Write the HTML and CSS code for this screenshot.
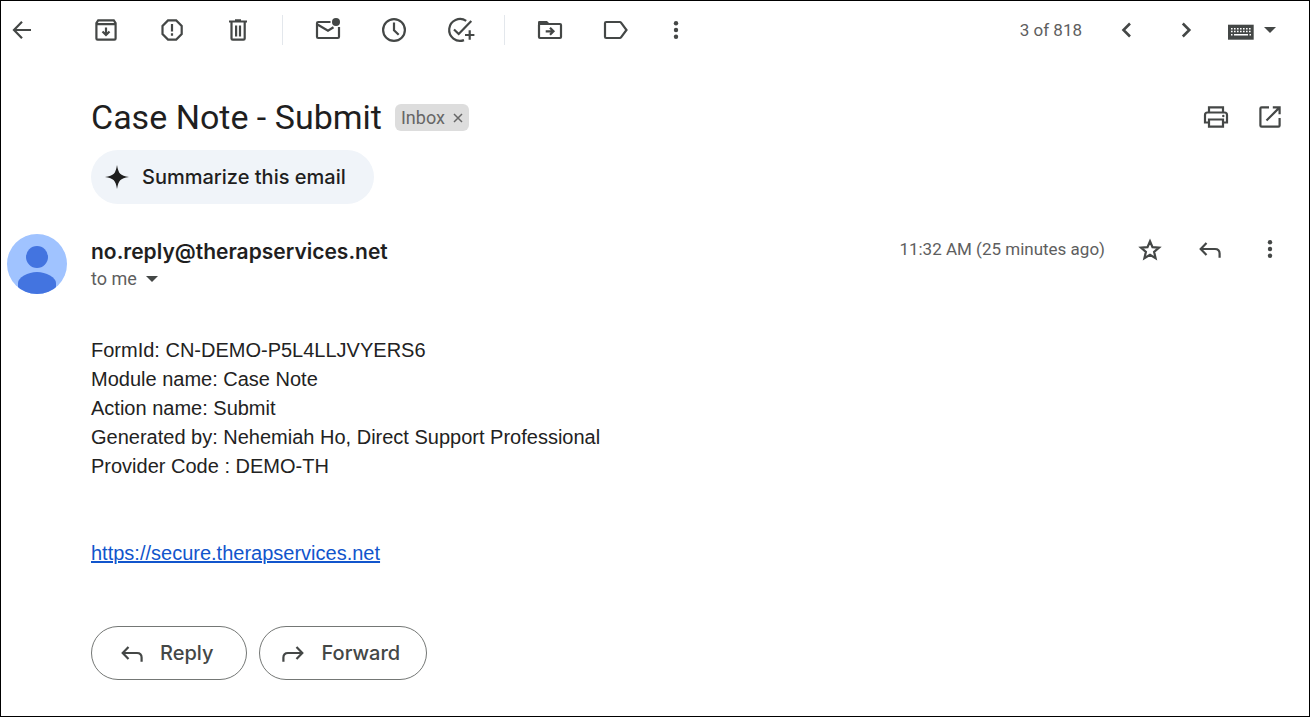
FILE: index.html
```html
<!DOCTYPE html>
<html lang="en">

<head>
    <meta charset="UTF-8">
    <meta name="viewport" content="width=device-width, initial-scale=1.0">
    <title>Case Note - Submit</title>
    <link rel="stylesheet" href="styles.css">
</head>

<body>

    <div class="mail">
        <header class="toolbar">
            <button class="icon-btn back" aria-label="Back to inbox">
                <svg viewBox="0 0 30 30"><path d="M24 15H7.5M15 6.7L7 15l8 8.3"/></svg>
            </button>
            <div class="group">
                <button class="icon-btn" aria-label="Archive">
                    <svg viewBox="0 0 30 30"><path d="M5.4 9.2V23.4q0 1.2 1.2 1.2h16.8q1.2 0 1.2-1.2V9.2M5.4 9.2V8l1.8-2.6h15.6L24.6 8v1.2zM15 12.5v7M11.5 16.5l3.5 3.5 3.5-3.5"/></svg>
                </button>
                <button class="icon-btn" aria-label="Report spam">
                    <svg viewBox="0 0 30 30"><path d="M11 5.4h8.2l5.5 5.5v8.2l-5.5 5.5H11l-5.5-5.5v-8.2z"/><path d="M15 9v7.5M15 18.3v2.4"/></svg>
                </button>
                <button class="icon-btn" aria-label="Delete">
                    <svg viewBox="0 0 30 30"><path d="M6 6.5h18M12 5.3h6M8.5 7v16.5q0 1.2 1.2 1.2h10.800q1.200 0 1.200-1.200V7M13.100 10.500v11M17 10.500v11"/></svg>
                </button>
            </div>
            <div class="group">
                <button class="icon-btn" aria-label="Mark as unread">
                    <svg viewBox="0 0 30 30"><path d="M17.5 7H5.2q-1.2 0-1.2 1.2v13.6q0 1.2 1.2 1.2h19.6q1.200 0 1.200-1.200V12M4.500 9.500l10.500 6.200 5.500-3.400"/><circle class="solid" cx="23" cy="7" r="4"/></svg>
                </button>
                <button class="icon-btn" aria-label="Snooze">
                    <svg viewBox="0 0 30 30"><circle cx="15" cy="15" r="10.9"/><path d="M15 7.5v7.8l4.7 4.5"/></svg>
                </button>
                <button class="icon-btn" aria-label="Add to tasks">
                    <svg viewBox="0 0 30 30"><path d="M21.2 5.9A10.9 10.9 0 1 0 19 25.1M9 14.5l4.7 4.5L26.3 6M24.7 15.3v9.4M20 20h9.4"/></svg>
                </button>
            </div>
            <div class="group last">
                <button class="icon-btn" aria-label="Move to">
                    <svg viewBox="0 0 30 30"><rect x="4" y="9" width="22" height="14" rx="1"/><path class="solid" d="M3 10V7.2Q3 6 4.2 6H12l3 3v1z"/><path d="M10.7 16.3h7M15 12.8l3.5 3.5-3.5 3.5"/></svg>
                </button>
                <button class="icon-btn" aria-label="Labels">
                    <svg viewBox="0 0 30 30"><path d="M5.2 7h13.6q.8 0 1.4.8l5.3 7.2-5.3 7.2q-.6.8-1.4.8H5.2Q4 23 4 21.800V8.200Q4 7 5.200 7z"/></svg>
                </button>
            </div>
            <button class="icon-btn more" aria-label="More">
                <svg class="solid" viewBox="0 0 30 30"><circle cx="15" cy="8.2" r="2.2"/><circle cx="15" cy="15" r="2.2"/><circle cx="15" cy="21.8" r="2.2"/></svg>
            </button>
            <div class="pager">
                <span class="muted">3 of 818</span>
                <button class="icon-btn" aria-label="Newer">
                    <svg class="bold" viewBox="0 0 30 30"><path d="M18 8.5L11.5 15l6.5 6.5"/></svg>
                </button>
                <button class="icon-btn" aria-label="Older">
                    <svg class="bold" viewBox="0 0 30 30"><path d="M10.8 8.5l6.5 6.5-6.5 6.5"/></svg>
                </button>
                <button class="keyboard" aria-label="Input tools">
                    <svg viewBox="0 0 30 30"><path class="solid" d="M2 9.7h25.7v15H2z"/><path class="keys" d="M5 13.7h20M5 16.5h20"/><path class="space" d="M5 19.7h1.500M8 19.700h14M23.500 19.700h1.500"/></svg>
                    <span class="caret"></span>
                </button>
            </div>
        </header>

        <main class="message">
            <div class="subject-row">
                <h1 class="subject">Case Note - Submit</h1>
                <span class="label">Inbox
                    <button class="label-close" aria-label="Remove label">
                        <svg viewBox="0 0 10 10"><path d="M1 1l8 8M9 1L1 9"/></svg>
                    </button>
                </span>
                <div class="subject-actions">
                    <button class="icon-btn" aria-label="Print">
                        <svg viewBox="0 0 30 30"><path d="M8 10V5.3h14V10M8 20.5H4V13q0-2.5 2.5-2.5h17Q26 10.500 26 13v7.500h-4M8 17.500h14v7.200H8z"/><circle class="solid" cx="22.300" cy="14" r="1.200"/></svg>
                    </button>
                    <button class="icon-btn" aria-label="Open in new window">
                        <svg viewBox="0 0 30 30"><path d="M14 5.4H6.6q-1.2 0-1.2 1.2v16.8q0 1.2 1.2 1.2h16.8q1.2 0 1.2-1.2V16M17.8 5.4h6.8v6.8M24.6 5.4L11.5 18.5"/></svg>
                    </button>
                </div>
            </div>

            <button class="summarize">
                <svg viewBox="0 0 24 24"><path d="M12 0Q13 6.5 15.2 8.8 17.5 11 24 12q-6.5 1-8.8 3.2Q13 17.5 12 24q-1-6.5-3.2-8.8Q6.5 13 0 12q6.5-1 8.8-3.2Q11 6.5 12 0z"/></svg>
                Summarize this email
            </button>

            <div class="sender-row">
                <svg class="avatar" viewBox="0 0 60 60">
                    <clipPath id="round"><circle cx="30" cy="30" r="30"/></clipPath>
                    <g clip-path="url(#round)">
                        <path fill="#a0c3ff" d="M0 0h60v60H0z"/>
                        <circle fill="#4374e0" cx="30" cy="23" r="11"/>
                        <path fill="#4374e0" d="M11 60V49q0-4 6-7.500Q23 38 30 38t13 3.500q6 3.500 6 7.500v11z"/>
                    </g>
                </svg>
                <div class="sender">
                    <span class="address">no.reply@therapservices.net</span>
                    <button class="recipient">to me <span class="caret"></span></button>
                </div>
                <div class="sender-actions">
                    <span class="muted">11:32 AM (25 minutes ago)</span>
                    <button class="icon-btn" aria-label="Star">
                        <svg viewBox="0 0 30 30"><path d="M15 7.200l2.500 5.900 6.500.5-4.900 4.200 1.500 6.400-5.600-3.400-5.600 3.400 1.500-6.400L6 13.600l6.500-.5z"/></svg>
                    </button>
                    <button class="icon-btn" aria-label="Reply">
                        <svg viewBox="0 0 30 30"><path d="M11.5 9L5.700 15l5.800 6M6.500 15H20q4.600 0 4.600 4.600v4.200"/></svg>
                    </button>
                    <button class="icon-btn" aria-label="More">
                        <svg class="solid" viewBox="0 0 30 30"><circle cx="15" cy="8.2" r="2.2"/><circle cx="15" cy="15" r="2.2"/><circle cx="15" cy="21.8" r="2.2"/></svg>
                    </button>
                </div>
            </div>

            <div class="body">
                <p>
                    FormId: CN-DEMO-P5L4LLJVYERS6<br>
                    Module name: Case Note<br>
                    Action name: Submit<br>
                    Generated by: Nehemiah Ho, Direct Support Professional<br>
                    Provider Code : DEMO-TH
                </p>
                <p><a href="https://secure.therapservices.net">https://secure.therapservices.net</a></p>
            </div>

            <div class="replies">
                <button class="pill reply">
                    <svg viewBox="0 0 30 30"><path d="M11.5 9L5.700 15l5.800 6M6.500 15H20q4.600 0 4.600 4.600v4.200"/></svg>
                    Reply
                </button>
                <button class="pill">
                    <svg viewBox="0 0 30 30"><path d="M18.500 9l5.800 6-5.800 6M23.500 15H10q-4.600 0-4.600 4.600v4.200"/></svg>
                    Forward
                </button>
            </div>
        </main>
    </div>

</body>

</html>
```

FILE: styles.css
```css
* {
    box-sizing: border-box;
}

body {
    margin: 0;
    background-color: #fff;
    color: #1f1f1f;
    font-family: Roboto, sans-serif;
}

button {
    display: flex;
    align-items: center;
    margin: 0;
    padding: 0;
    border: none;
    background: none;
    color: #444746;
    font-family: inherit;
    cursor: pointer;
}

svg {
    display: block;
    flex: none;
    width: 30px;
    height: 30px;
    fill: none;
    stroke: #444746;
    stroke-width: 2.2;
}

.solid {
    fill: #444746;
    stroke: none;
}

.bold {
    stroke-width: 2.6;
}

.muted {
    color: #5e5e5e;
    font-size: 17px;
    line-height: 24px;
    white-space: nowrap;
}

.caret {
    border: 6px solid transparent;
    border-top-color: #444746;
    border-bottom: none;
}

.mail {
    min-height: 100vh;
    padding: 0 24px 36px 6px;
    border: 1px solid #000;
}

/* toolbar */
.toolbar {
    display: flex;
    align-items: center;
    height: 58px;
}

.back {
    margin-right: 54px;
}

.group {
    display: flex;
    gap: 36px;
    margin-right: 30px;
    padding-right: 29px;
    border-right: 1px solid #e3e7ec;
}

.group.last {
    padding-right: 0;
    border-right: none;
}

.pager {
    display: flex;
    align-items: center;
    gap: 30px;
    margin-left: auto;
}

.keyboard {
    gap: 8px;
    padding-right: 9px;
    margin-left: -6px;
}

.keys {
    stroke: #fff;
    stroke-width: 1.6;
    stroke-dasharray: 1.6 1.4;
}

.space {
    stroke: #fff;
    stroke-width: 1.4;
}

/* message */
.subject-row {
    display: flex;
    align-items: center;
    height: 54px;
    margin: 31px 0 6px;
    padding-left: 84px;
}

.subject {
    margin: 0;
    font-size: 34px;
    font-weight: 400;
    line-height: 40px;
}

.label {
    display: flex;
    align-items: center;
    gap: 8px;
    height: 27px;
    margin-left: 13px;
    padding: 0 6px;
    border-radius: 6px;
    background-color: #ddd;
    color: #666;
    font-size: 18px;
}

.label-close {
    padding-top: 2px;
}

.label-close svg {
    width: 10px;
    height: 10px;
    stroke: #666;
    stroke-width: 1.5;
}

.subject-actions {
    display: flex;
    gap: 24px;
    margin-left: auto;
}

.summarize {
    gap: 13px;
    height: 54px;
    margin-left: 84px;
    padding: 0 28px 0 14px;
    border-radius: 27px;
    background-color: #f0f4f9;
    color: #1f1f1f;
    font-family: Inter, sans-serif;
    font-size: 20px;
    font-weight: 500;
}

.summarize svg {
    width: 24px;
    height: 24px;
    fill: #1f1f1f;
    stroke: none;
}

.sender-row {
    display: flex;
    gap: 24px;
    margin-top: 30px;
}

.avatar {
    width: 60px;
    height: 60px;
    stroke: none;
}

.sender {
    padding-top: 4px;
}

.address {
    display: block;
    font-family: Inter, sans-serif;
    font-size: 21px;
    font-weight: 600;
    line-height: 28px;
}

.recipient {
    gap: 9px;
    color: #5e5e5e;
    font-size: 18px;
    line-height: 26px;
}

.sender-actions {
    display: flex;
    align-items: center;
    gap: 30px;
    height: 30px;
    margin-left: auto;
}

.body {
    margin: 42px 0 0 84px;
    color: #222;
    font-family: "Liberation Sans", Arial, sans-serif;
    font-size: 20px;
    line-height: 29px;
}

.body p {
    margin: 0 0 58px;
}

.body a {
    color: #15c;
}

.replies {
    display: flex;
    gap: 12px;
    margin-left: 84px;
}

.pill {
    gap: 13px;
    height: 54px;
    padding: 0 26px 0 18px;
    border: 1px solid #747775;
    border-radius: 27px;
    font-family: Inter, sans-serif;
    font-size: 20px;
    font-weight: 500;
}

.pill.reply {
    padding: 0 33px 0 25px;
}
```
